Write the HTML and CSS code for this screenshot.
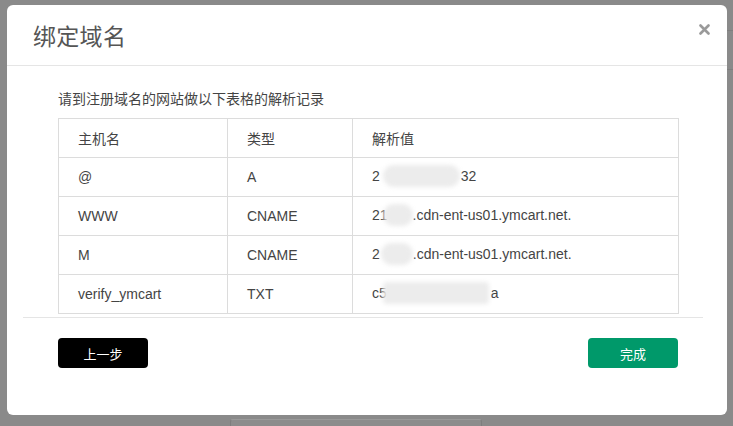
FILE: index.html
```html
<!DOCTYPE html>
<html lang="zh-CN">
<head>
<meta charset="utf-8">
<title>绑定域名</title>
<link rel="stylesheet" href="styles.css">
</head>
<body>
<div class="backdrop-box"></div>
<div class="backdrop-side"></div>
<div class="modal">
  <div class="modal-header">
    <h4 class="modal-title">绑定域名</h4>
    <span class="close" aria-label="关闭">
      <svg width="11" height="11" viewBox="0 0 11 11"><path d="M1.5 1.5 L9.5 9.5 M9.5 1.5 L1.5 9.5" stroke="#9a9a9a" stroke-width="2.6" stroke-linecap="round"/></svg>
    </span>
  </div>
  <div class="modal-body">
    <p class="hint">请到注册域名的网站做以下表格的解析记录</p>
    <table class="dns">
      <colgroup>
        <col class="c1"><col class="c2"><col class="c3">
      </colgroup>
      <tr><td>主机名</td><td>类型</td><td>解析值</td></tr>
      <tr><td>@</td><td>A</td><td>2<span class="mask m1"></span>32</td></tr>
      <tr><td>WWW</td><td>CNAME</td><td>21<span class="mask m2"></span>.cdn-ent-us01.ymcart.net.</td></tr>
      <tr><td>M</td><td>CNAME</td><td>2<span class="mask m3"></span>.cdn-ent-us01.ymcart.net.</td></tr>
      <tr><td>verify_ymcart</td><td>TXT</td><td>c5<span class="mask m4"></span>a</td></tr>
    </table>
  </div>
  <div class="modal-footer">
    <button class="btn btn-back">上一步</button>
    <button class="btn btn-done">完成</button>
  </div>
</div>
</body>
</html>
```
FILE: styles.css
```css
html, body {
  margin: 0;
  padding: 0;
}
body {
  background: #8a8a8a;
  width: 733px;
  height: 426px;
  overflow: hidden;
  position: relative;
  font-family: "Liberation Sans", Arial, "Noto Sans CJK SC", sans-serif;
  padding-top: 5px;
  box-sizing: border-box;
}
.backdrop-box {
  position: absolute;
  left: 230px;
  top: 419px;
  width: 250px;
  height: 20px;
  border: 1px solid #7e7e7e;
  border-top-color: #9a9a9a;
  border-radius: 3px;
  background: #8c8c8c;
}
.backdrop-side {
  position: absolute;
  left: 726px;
  top: 30px;
  width: 20px;
  height: 38px;
  border-top: 1px solid #7f7f7f;
  border-bottom: 1px solid #7f7f7f;
}
.modal {
  position: relative;
  margin-left: 7px;
  width: 720px;
  height: 410px;
  background: #fff;
  border-radius: 6px;
  display: flex;
  flex-direction: column;
}
.modal-header {
  box-sizing: border-box;
  padding: 15px 26px;
  border-bottom: 1px solid #e5e5e5;
  height: 61px;
}
.modal-title {
  margin: 0;
  font-family: "Noto Sans CJK SC", sans-serif;
  font-weight: normal;
  font-size: 23px;
  line-height: 30px;
  color: #555;
  letter-spacing: 0.3px;
}
.close {
  position: absolute;
  right: 17px;
  top: 19px;
  width: 11px;
  height: 11px;
  display: block;
}
.close svg { display: block; }
.modal-body {
  padding: 22px 49px 0 51px;
}
.hint {
  margin: 0 0 10px;
  font-family: "Noto Sans CJK SC", sans-serif;
  font-size: 14px;
  line-height: 20px;
  color: #444;
}
.dns {
  border-collapse: collapse;
  width: 620px;
  table-layout: fixed;
  border: 1px solid #dcdcdc;
}
.c1 { width: 169px; }
.c2 { width: 125px; }
.c3 { width: 326px; }
.dns td {
  border: 1px solid #dcdcdc;
  height: 39px;
  padding: 0 0 0 19px;
  box-sizing: border-box;
  font-size: 14px;
  color: #444;
  white-space: nowrap;
  vertical-align: middle;
  font-family: "Liberation Sans", Arial, "Noto Sans CJK SC", sans-serif;
}
.mask {
  display: inline-block;
  vertical-align: middle;
  height: 22px;
  background: #ececec;
  border-radius: 11px;
  filter: blur(2px);
  margin-top: -3px;
}
.m1 { width: 77px; margin-left: 3px; margin-right: 1px; }
.m2 { width: 30px; margin-left: -5px; }
.m3 { width: 32px; margin-left: 1px; }
.m4 { width: 106px; margin-left: -4px; margin-right: 2px; border-radius: 4px; }
.modal-footer {
  margin: 3px 24px 0 16px;
  border-top: 1px solid #e5e5e5;
  padding: 20px 25px 0 35px;
  display: flex;
  justify-content: space-between;
}
.btn {
  width: 90px;
  height: 30px;
  border: none;
  border-radius: 4px;
  color: #fff;
  font-family: "Noto Sans CJK SC", sans-serif;
  font-size: 13px;
  padding: 0;
  cursor: pointer;
}
.btn-back { background: #000; }
.btn-done { background: #00996a; }
```
